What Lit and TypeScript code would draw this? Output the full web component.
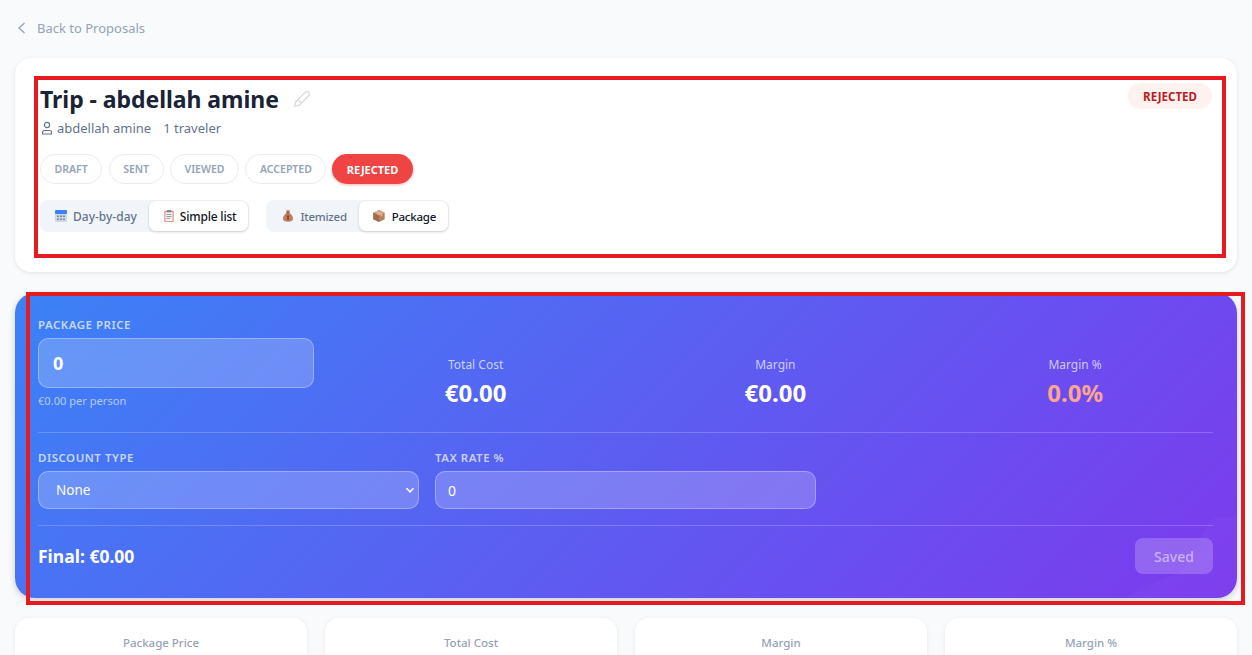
import { LitElement, html, css } from "lit";
import { customElement } from "lit/decorators.js";

const calendar = html`<svg class="emoji" viewBox="1 1 12 12"><rect x="1" y="1" width="12" height="12" rx="1.500" fill="#ccd6e4"/><rect x="1" y="1" width="12" height="4" rx="1.200" fill="#3b82f6"/><g fill="#7d8ba0"><rect x="3" y="6.500" width="2" height="1.500"/><rect x="6" y="6.500" width="2" height="1.500"/><rect x="9" y="6.500" width="2" height="1.500"/><rect x="3" y="9.500" width="2" height="1.500"/><rect x="6" y="9.500" width="2" height="1.500"/><rect x="9" y="9.500" width="2" height="1.500"/></g></svg>`;
const clipboard = html`<svg class="emoji" viewBox="1 .6 12 12.800"><rect x="2" y="1.500" width="10" height="12" rx="1" fill="#e0907c"/><rect x="3.200" y="3" width="7.600" height="9.400" fill="#f1f3f5"/><rect x="4.800" y=".6" width="4.400" height="2.400" rx=".6" fill="#7d8796"/><g fill="#8a94a3"><rect x="4.200" y="5" width="5.600" height=".9"/><rect x="4.200" y="7" width="5.600" height=".9"/><rect x="4.200" y="9" width="4" height=".9"/></g></svg>`;
const moneybag = html`<svg class="emoji" viewBox="1 1 12 12.400"><path d="M5 1.200h4L8.200 4c2.400 1.200 4 3.600 4 5.800 0 2.400-2 3.400-5.200 3.400S1.800 12.200 1.800 9.800C1.800 7.600 3.400 5.200 5.800 4z" fill="#c47a5c"/><rect x="5.300" y="3.300" width="3.400" height="1" fill="#8a5239"/><path d="M7 6.200v5M5.800 7.600h2.200M5.800 9.600h2.200" stroke="#5e3423" stroke-width=".8" fill="none"/></svg>`;
const box = html`<svg class="emoji" viewBox="1 1 12 12.200"><path d="M7 1l5.800 2.900v6.400L7 13.200 1.200 10.300V3.900z" fill="#b9805e"/><path d="M7 1l5.800 2.900L7 6.800 1.200 3.900z" fill="#d3a184"/><path d="M7 6.800v6.400L1.200 10.300V3.900z" fill="#a06a4b"/><path d="M4 2.500l5.800 2.900v2" stroke="#e6cdb9" stroke-width="1" fill="none"/></svg>`;

@customElement("app-root")
export class AppRoot extends LitElement {
  static styles = css`
    :host { display: block; position: relative; height: 655px; overflow: hidden; background: #f8fafc;
      font-family: "Noto Sans", "Open Sans", sans-serif; color: #1e293b; box-sizing: border-box; padding: 0 15px; }
    * { box-sizing: border-box; }
    .back { display: flex; align-items: center; gap: 8px; height: 58px; padding: 0 0 3px 0; color: #94a3b8; font-size: 13px; }
    .back svg { width: 14px; height: 14px; }
    .card { position: relative; height: 214px; background: #fff; border-radius: 16px; padding: 24px 25px;
      box-shadow: 0 1px 4px rgba(15,23,42,.1); }
    .title-row { display: flex; align-items: center; gap: 14px; height: 34px; }
    h1 { margin: 0; font-size: 23px; letter-spacing: -.05px; line-height: 34px; font-weight: 700; color: #1a2235; }
    .pencil { width: 18px; height: 18px; }
    .status { position: absolute; top: 25px; right: 25px; height: 26px; width: 84px; display: flex; align-items: center; justify-content: center;
      border-radius: 13px; background: #fef2f0; color: #b91c1c; font-size: 11.500px; font-weight: 700; }
    .meta { display: flex; align-items: center; margin-top: 1px; height: 22px; font-size: 13px; color: #64748b; }
    .meta svg { width: 14px; height: 14px; margin-right: 3px; }
    .meta span + span { margin-left: 12px; }
    .pills { display: flex; gap: 6.500px; margin-top: 15px; }
    .pill { height: 30px; display: flex; align-items: center; padding: 0 13.500px; border-radius: 15px; border: 1px solid #e8ecf1; background: #fff;
      color: #94a3b8; font-size: 10.500px; font-weight: 600; }
    .pill.on { border: 0; padding: 0 14.500px; margin-left: -.5px; background: #ef4444; color: #fff; font-size: 11px; font-weight: 700; box-shadow: 0 1px 3px rgba(239,68,68,.4); }
    .toggles { display: flex; gap: 17px; margin-top: 16px; }
    .seg { display: flex; height: 32px; padding: 1px; border-radius: 8px; background: #f1f5f9; }
    .seg div { display: flex; align-items: center; gap: 6px; padding: 0 12px 0 14px; border-radius: 7px; font-size: 12px; font-weight: 500; color: #64748b; }
    .seg.list .on { gap: 5px; letter-spacing: -.2px; }
    .seg.tight div { font-size: 11.500px; letter-spacing: -.25px; }
    .seg.tight div:first-child { padding-left: 15px; }
    .seg.tight .on { gap: 7px; }
    .seg .on { background: #fff; color: #111827; box-shadow: 0 1px 3px rgba(15,23,42,.18); }
    .emoji { width: 12px; height: 12px; flex: none; }
    .panel { position: relative; height: 305px; margin-top: 21px; border-radius: 20px; padding: 24px 24px 24px 23px; overflow: hidden;
      background: linear-gradient(135deg, #3b82f6 0%, #7c3aed 100%); color: #fff;
      box-shadow: 0 2px 6px rgba(15,23,42,.2); }
    .wave { position: absolute; right: 0; bottom: 0; width: 110px; height: 81px; }
    .top { position: relative; display: grid; grid-template-columns: repeat(4, 1fr); gap: 24px; height: 116px; border-bottom: 1px solid rgba(255,255,255,.2); }
    label, .lbl { display: block; font-size: 11.500px; font-weight: 600; letter-spacing: .5px; text-transform: uppercase; color: rgba(255,255,255,.7); line-height: 16px; }
    .price { display: flex; align-items: center; height: 50px; margin-top: 5px; padding: 0 14px; border-radius: 10px;
      background: rgba(255,255,255,.2); border: 1px solid rgba(255,255,255,.3); font-size: 18px; font-weight: 700; }
    .per { margin-top: 5px; font-size: 11.100px; line-height: 16px; color: rgba(255,255,255,.6); }
    .stat { display: flex; flex-direction: column; align-items: center; justify-content: flex-end; padding-bottom: 24px; }
    .stat .k { font-size: 12px; line-height: 16px; color: rgba(255,255,255,.7); }
    .stat .v { margin-top: 5px; font-size: 24px; line-height: 30px; font-weight: 700; }
    .v.warn { color: #fca58f; }
    .mid { position: relative; display: grid; grid-template-columns: repeat(3, 1fr); gap: 16px; padding: 17px 0 16px; height: 93px; border-bottom: 1px solid rgba(255,255,255,.2); }
    .field { display: flex; align-items: center; justify-content: space-between; height: 38px; margin-top: 5px; padding: 0 3px 0 17px; border-radius: 10px;
      background: rgba(255,255,255,.2); border: 1px solid rgba(255,255,255,.3); font-size: 13.500px; }
    .field.num { padding-left: 12px; font-size: 14px; }
    .field svg { width: 10px; height: 10px; }
    .foot { position: relative; display: flex; align-items: center; justify-content: space-between; padding-top: 12px; }
    .final { font-size: 17.500px; font-weight: 700; }
    .saved { width: 78px; height: 36px; display: flex; align-items: center; justify-content: center; border-radius: 8px;
      background: rgba(255,255,255,.2); color: rgba(255,255,255,.5); font-size: 14px; font-weight: 500; }
    .stats { display: grid; grid-template-columns: repeat(4, 1fr); gap: 18px; margin-top: 20px; }
    .box { height: 90px; padding-top: 16px; border-radius: 14px; background: #fff; text-align: center; font-size: 11.500px; line-height: 18px; font-weight: 500; color: #94a3b8;
      box-shadow: 0 1px 4px rgba(15,23,42,.08); }
    .mark { position: absolute; border: 4px solid #e51b1f; pointer-events: none; }
    .m1 { left: 34px; top: 76px; width: 1192px; height: 182px; }
    .m2 { left: 26px; top: 292px; width: 1219px; height: 313px; }
  `;

  render() {
    const stages = ["Draft", "Sent", "Viewed", "Accepted"];
    return html`
      <div class="back">
        <svg viewBox="0 0 14 14"><path d="M9.500 2 4 7l5.500 5" fill="none" stroke="#94a3b8" stroke-width="1.300"/></svg>
        <span>Back to Proposals</span>
      </div>
      <section class="card">
        <div class="title-row">
          <h1>Trip - abdellah amine</h1>
          <svg class="pencil" viewBox="0 0 18 18" fill="none" stroke="#d9dce1" stroke-width="1.400"><path d="M1.800 16.200l1-4.500L12.300 2.300a2.200 2.200 0 0 1 3.400 3.400L6.300 15.200z"/><path d="M5 10l3 3"/></svg>
        </div>
        <div class="status">REJECTED</div>
        <div class="meta">
          <svg viewBox="0 0 14 14" fill="none" stroke="#64748b" stroke-width="1.200"><circle cx="7" cy="4" r="2.600"/><path d="M2.500 13v-1.500a2 2 0 0 1 2-2h5a2 2 0 0 1 2 2V13z"/></svg>
          <span>abdellah amine</span><span>1 traveler</span>
        </div>
        <div class="pills">
          ${stages.map((s) => html`<div class="pill">${s.toUpperCase()}</div>`)}
          <div class="pill on">REJECTED</div>
        </div>
        <div class="toggles">
          <div class="seg list"><div>${calendar}Day-by-day</div><div class="on">${clipboard}Simple list</div></div>
          <div class="seg tight"><div>${moneybag}Itemized</div><div class="on">${box}Package</div></div>
        </div>
      </section>
      <section class="panel">
        <svg class="wave" viewBox="0 0 110 81" preserveAspectRatio="none">
          <path d="M0 81C15 68 35 62 52 56 70 40 72 12 88 0H110V81z" fill="rgba(255,255,255,.025)"/>
        </svg>
        <div class="top">
          <div>
            <div class="lbl">Package price</div>
            <div class="price">0</div>
            <div class="per">€0.00 per person</div>
          </div>
          <div class="stat"><div class="k">Total Cost</div><div class="v">€0.00</div></div>
          <div class="stat"><div class="k">Margin</div><div class="v">€0.00</div></div>
          <div class="stat"><div class="k">Margin %</div><div class="v warn">0.0%</div></div>
        </div>
        <div class="mid">
          <div>
            <label>Discount type</label>
            <div class="field"><span>None</span>
              <svg viewBox="0 0 10 10"><path d="M1.500 3.200 5 6.800l3.500-3.600" fill="none" stroke="#fff" stroke-width="1.600"/></svg>
            </div>
          </div>
          <div>
            <label>Tax rate %</label>
            <div class="field num"><span>0</span></div>
          </div>
        </div>
        <div class="foot">
          <div class="final">Final: €0.00</div>
          <div class="saved">Saved</div>
        </div>
      </section>
      <section class="stats">
        <div class="box">Package Price</div>
        <div class="box">Total Cost</div>
        <div class="box">Margin</div>
        <div class="box">Margin %</div>
      </section>
      <div class="mark m1"></div>
      <div class="mark m2"></div>
    `;
  }
}
